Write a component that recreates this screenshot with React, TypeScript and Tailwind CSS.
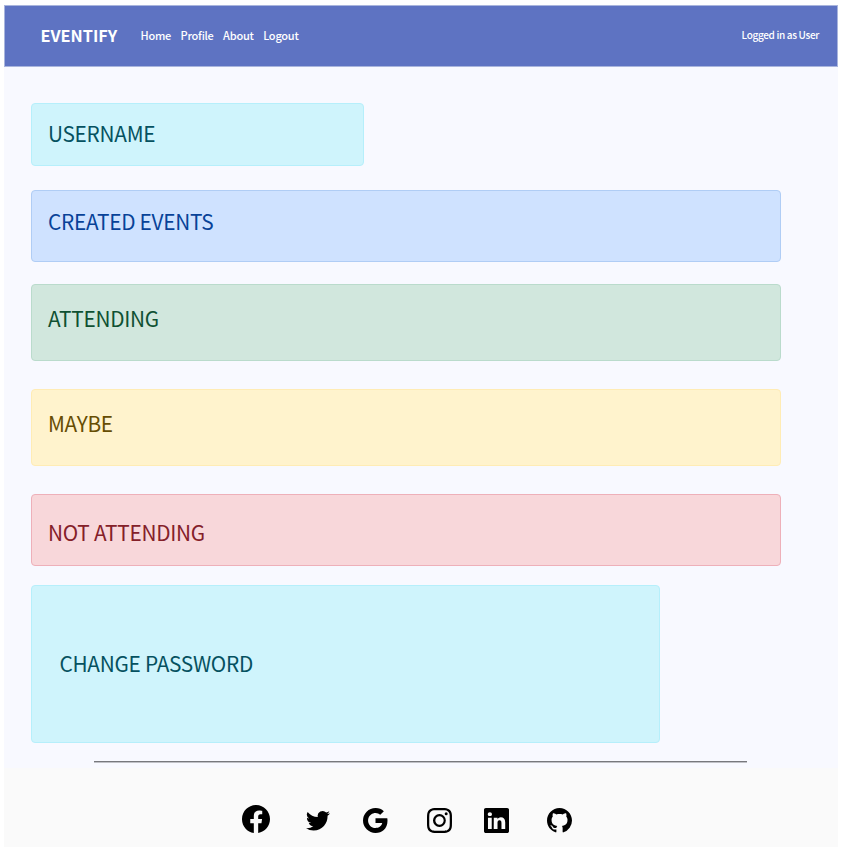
import React from "react";
import { BsFacebook, BsTwitter, BsGoogle, BsInstagram, BsLinkedin, BsGithub } from "react-icons/bs";

const links = ["Home", "Profile", "About", "Logout"];

type PanelProps = { title: string; className: string };

function Panel({ title, className }: PanelProps) {
  return (
    <section className={`flex rounded-[4px] border text-[20.8px] leading-[30px] tracking-[-0.27px] whitespace-nowrap ${className}`}>
      <h2>{title}</h2>
    </section>
  );
}

export default function App() {
  return (
    <div className="h-[847px] w-[842px] overflow-hidden bg-white pt-[5px] pl-1 font-['Noto_Sans_CJK_SC',sans-serif]">
      <div className="flex h-[842px] w-[834px] flex-col bg-[#f8f9ff]">
        <nav className="flex h-[62px] shrink-0 items-center border border-[#a9b5dd] bg-[#5e73c2] pr-[18px] pb-[2px] pl-[35.5px] text-white">
          <span className="w-[100px] text-[16.3px] leading-6 font-bold">EVENTIFY</span>
          <div className="flex gap-[9.5px] text-[11px] leading-4 font-medium tracking-[-0.24px]">
            {links.map((link) => (
              <a key={link} href="#">{link}</a>
            ))}
          </div>
          <span className="ml-auto text-[10px] leading-4 font-medium tracking-[-0.34px]">Logged in as User</span>
        </nav>
        <main className="flex h-[701px] shrink-0 flex-col items-start pt-9 pl-[27px]">
          <Panel title="USERNAME" className="h-[63px] w-[333px] border-[#b6effb] bg-[#cff4fc] pt-[14px] pl-4 text-[#055160]" />
          <Panel title="CREATED EVENTS" className="mt-6 h-[72px] w-[750px] border-[#b0cdf5] bg-[#cfe2ff] pt-[15px] pl-4 text-[#084298]" />
          <Panel title="ATTENDING" className="mt-[22px] h-[77px] w-[750px] border-[#badbcc] bg-[#d1e7dd] pt-[18px] pl-4 text-[#0f5132]" />
          <Panel title="MAYBE" className="mt-7 h-[77px] w-[750px] border-[#ffecb5] bg-[#fff3cd] pt-[18px] pl-4 text-[#664d03]" />
          <Panel title="NOT ATTENDING" className="mt-7 h-[72px] w-[750px] border-[#eeb0b9] bg-[#f8d7da] pt-[22px] pl-4 text-[#842029]" />
          <Panel title="CHANGE PASSWORD" className="mt-[19px] h-[158px] w-[629px] border-[#b6effb] bg-[#cff4fc] pt-[62px] pl-[27.5px] text-[#055160]" />
          <hr className="mt-[18px] ml-[63px] h-[2px] w-[653px] border-t border-b border-t-[#77787d] border-b-[#c0c1c7]" />
        </main>
        <footer className="flex flex-1 items-start bg-[#fafafa] pl-[238px] text-black">
          <BsFacebook className="mt-[37px] size-7" />
          <BsTwitter className="mt-10 ml-9 size-6" />
          <BsGoogle className="mt-10 ml-[33px] size-[25px]" />
          <BsInstagram className="mt-10 ml-[39px] size-[25px]" />
          <BsLinkedin className="mt-10 ml-8 size-[25px]" />
          <BsGithub className="mt-10 ml-[38px] size-[25px]" />
        </footer>
      </div>
    </div>
  );
}
